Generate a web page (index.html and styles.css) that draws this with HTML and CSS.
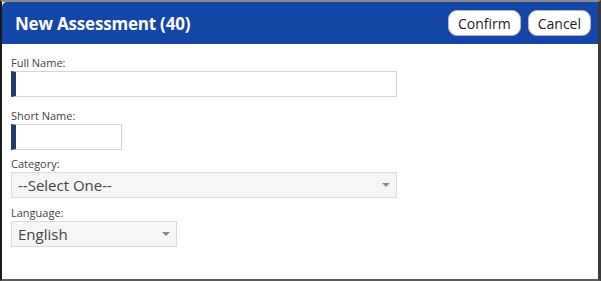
FILE: index.html
```html
<!DOCTYPE html>
<html lang="en">
<head>
    <meta charset="UTF-8">
    <meta name="viewport" content="width=device-width, initial-scale=1.0">
    <title>New Assessment</title>
    <link rel="stylesheet" href="styles.css">
</head>
<body>
    <div class="dialog">
        <header class="dialog-header">
            <h1>New Assessment (40)</h1>
            <div class="actions">
                <button type="button" class="btn">Confirm</button>
                <button type="button" class="btn">Cancel</button>
            </div>
        </header>

        <form class="dialog-body">
            <div class="field first">
                <label for="fullName">Full Name:</label>
                <input type="text" id="fullName" class="input required wide">
            </div>
            <div class="field second">
                <label for="shortName">Short Name:</label>
                <input type="text" id="shortName" class="input required short">
            </div>
            <div class="field">
                <label for="category">Category:</label>
                <div class="select wide" id="category">
                    <span>--Select One--</span>
                    <span class="caret"></span>
                </div>
            </div>
            <div class="field">
                <label for="language">Language:</label>
                <div class="select medium" id="language">
                    <span>English</span>
                    <span class="caret"></span>
                </div>
            </div>
        </form>
    </div>
</body>
</html>
```

FILE: styles.css
```css
* {
    margin: 0;
    padding: 0;
    box-sizing: border-box;
}

html, body {
    height: 100%;
}

body {
    font-family: 'Open Sans', 'Noto Sans', sans-serif;
    color: #333;
    background-color: #fff;
}

.dialog {
    height: 281px;
    border-top: 2px solid #8a8a8a;
    border-left: 2px solid #1a1a1a;
    border-right: 3px solid #3a3a3a;
    border-bottom: 2px solid #5a5a5a;
    background: #fff;
}

.dialog-header {
    display: flex;
    align-items: center;
    justify-content: space-between;
    height: 42px;
    padding: 0 7px 0 13px;
    background-color: #1446a8;
    border-top-left-radius: 5px;
}

.dialog-header h1 {
    color: #fff;
    font-size: 17px;
    font-weight: 700;
    letter-spacing: -0.2px;
}

.actions {
    display: flex;
    gap: 7px;
}

.btn {
    height: 26px;
    padding: 0 9px;
    font-family: 'Open Sans', 'Noto Sans', sans-serif;
    font-size: 14px;
    color: #222;
    background: #fff;
    border: 1px solid #b8b8b8;
    border-radius: 9px;
    cursor: pointer;
}

.dialog-body {
    padding: 12px 9px 0;
}

.field {
    margin-bottom: 8px;
}

.field.first {
    margin-bottom: 12px;
}

.field.second {
    margin-bottom: 7px;
}

.field label {
    display: block;
    font-size: 11px;
    line-height: 13px;
    color: #444;
    margin-bottom: 2px;
}

.input {
    display: block;
    height: 26px;
    border: 1px solid #d4d4d4;
    border-left: 5px solid #1f3a6b;
    background: #fff;
}

.wide {
    width: 386px;
}

.short {
    width: 111px;
}

.medium {
    width: 166px;
}

.select {
    display: flex;
    align-items: center;
    justify-content: space-between;
    height: 26px;
    padding: 0 6px 0 6px;
    font-size: 15px;
    color: #444;
    background: #f6f6f6;
    border: 1px solid #dcdcdc;
}

.caret {
    width: 0;
    height: 0;
    border-left: 4px solid transparent;
    border-right: 4px solid transparent;
    border-top: 4px solid #888;
}
```
